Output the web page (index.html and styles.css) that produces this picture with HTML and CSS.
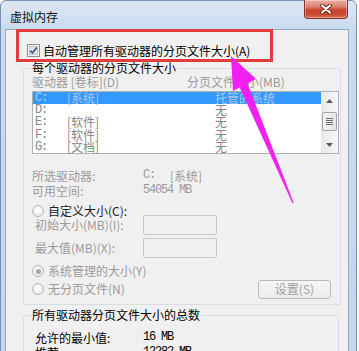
FILE: index.html
```html
<!DOCTYPE html>
<html lang="zh-CN">
<head>
<meta charset="utf-8">
<title>虚拟内存</title>
<link rel="stylesheet" href="styles.css">
</head>
<body>
<div class="window">
  <div class="titlebar">
    <span class="title">虚拟内存</span>
    <button class="close" aria-label="关闭">
      <svg width="12" height="10" viewBox="0 0 12 10"><path d="M2 1.5 L10 8.5 M10 1.5 L2 8.5" stroke="#6a2216" stroke-width="4" stroke-linecap="round"/><path d="M2 1.5 L10 8.5 M10 1.5 L2 8.5" stroke="#ffffff" stroke-width="2.2" stroke-linecap="round"/></svg>
    </button>
  </div>
  <div class="client">
    <label class="auto-row">
      <span class="checkbox"><svg width="13" height="13" viewBox="0 0 13 13"><rect x="0.5" y="0.5" width="12" height="12" fill="#f4f4f4" stroke="#8f8f8f"/><rect x="2.5" y="2.5" width="8" height="8" fill="#e2e6ea" stroke="#c2c8cf"/><path d="M3.3 6.6 L5.5 8.9 L9.8 3.6" fill="none" stroke="#4a5d86" stroke-width="1.7"/></svg></span>
      <span>自动管理所有驱动器的分页文件大小(A)</span>
    </label>
    <fieldset class="group drives">
      <legend>每个驱动器的分页文件大小</legend>
      <div class="list-head gray"><span class="col-drive">驱动器 [卷标](D)</span><span>分页文件大小(MB)</span></div>
      <div class="listbox">
        <div class="rows">
          <div class="row selected"><span class="mono drv">C:</span><span class="vol">[系统]</span><span class="size">托管的系统</span></div>
          <div class="row"><span class="mono drv">D:</span><span class="vol"></span><span class="size">无</span></div>
          <div class="row"><span class="mono drv">E:</span><span class="vol">[软件]</span><span class="size">无</span></div>
          <div class="row"><span class="mono drv">F:</span><span class="vol">[软件]</span><span class="size">无</span></div>
          <div class="row"><span class="mono drv">G:</span><span class="vol">[文档]</span><span class="size">无</span></div>
        </div>
        <div class="scrollbar">
          <div class="sb-btn"><svg width="7" height="4" viewBox="0 0 7 4"><path d="M0 4 L3.5 0 L7 4 Z" fill="#5a5a5a"/></svg></div>
          <div class="sb-track">
            <div class="sb-thumb"><i></i><i></i><i></i><i></i></div>
          </div>
          <div class="sb-btn"><svg width="7" height="4" viewBox="0 0 7 4"><path d="M0 0 L7 0 L3.5 4 Z" fill="#5a5a5a"/></svg></div>
        </div>
      </div>
      <div class="info gray">
        <div class="info-row"><span class="info-label">所选驱动器:</span><span class="mono drv2">C:</span><span>[系统]</span></div>
        <div class="info-row"><span class="info-label">可用空间:</span><span class="mono">54054 MB</span></div>
      </div>
      <div class="radio-row custom">
        <span class="radio"></span><span class="dark">自定义大小(C):</span>
      </div>
      <div class="size-rows gray">
        <div class="size-row"><span class="size-label">初始大小(MB)(I):</span><input class="field" type="text" disabled></div>
        <div class="size-row"><span class="size-label">最大值(MB)(X):</span><input class="field" type="text" disabled></div>
      </div>
      <div class="radio-row managed gray">
        <span class="radio on"><span class="dot"></span></span><span>系统管理的大小(Y)</span>
      </div>
      <div class="last-row gray">
        <div class="radio-line"><span class="radio"></span><span>无分页文件(N)</span></div>
        <button class="btn" disabled>设置(S)</button>
      </div>
    </fieldset>
    <fieldset class="group totals">
      <legend>所有驱动器分页文件大小的总数</legend>
      <div class="total-row first"><span class="total-label">允许的最小值:</span><span class="mono">16 MB</span></div>
      <div class="total-row"><span class="total-label">推荐:</span><span class="mono">12282 MB</span></div>
    </fieldset>
  </div>
  <div class="redbox"></div>
  <svg class="arrow" width="359" height="351" viewBox="0 0 359 351">
    <path d="M231 56 L256 79 L233 91 Z" fill="#f020f0"/>
    <path d="M239 86 L247 82 L293.6 202.6 L292.6 203.4 Z" fill="#f020f0"/>
  </svg>
</div>
</body>
</html>
```

FILE: styles.css
```css
* { box-sizing: border-box; }
html, body { margin: 0; padding: 0; }
body {
  width: 359px;
  height: 351px;
  overflow: hidden;
  background: #ffffff;
  font-family: "Noto Sans CJK SC", "Noto Sans", sans-serif;
  font-size: 12px;
  color: #000;
}
.window {
  position: relative;
  width: 357px;
  height: 362px;
  border: 1px solid #7590b0;
  border-radius: 6px 6px 0 0;
  background: linear-gradient(#dce7f4, #cadbee 28px, #c3d6ec);
  display: flex;
  flex-direction: column;
}
.titlebar {
  flex: none;
  height: 28px;
  display: flex;
  align-items: flex-start;
  padding-left: 9px;
}
.title {
  margin-top: 10px;
  line-height: 12px;
  font-size: 12px;
  color: #111;
}
.close {
  margin: -1px 8px 0 auto;
  width: 44px;
  height: 19px;
  padding: 0;
  border: 1px solid #8a3124;
  border-top: none;
  border-radius: 0 0 4px 4px;
  background: linear-gradient(#eab0a3, #dc7d6b 40%, #c8452f 55%, #c64a30 80%, #d8745a);
  display: flex;
  align-items: center;
  justify-content: center;
  box-shadow: inset 0 0 0 1px rgba(255,255,255,0.35);
}
.client {
  flex: 1;
  margin: 0 7px 0 4px;
  border: 1px solid #95aac2;
  border-bottom: none;
  background: #f0f0f0;
  display: flex;
  flex-direction: column;
}
.auto-row {
  margin-top: 14px;
  padding-left: 21px;
  height: 13px;
  display: flex;
  align-items: center;
  gap: 3px;
  line-height: 13px;
}
.checkbox { display: flex; width: 13px; height: 13px; }
.gray { color: #9b9b9b; }
.dark { color: #222; }
.mono {
  font-family: "Liberation Mono", monospace;
  letter-spacing: -1.2px;
}
.group {
  margin: 0;
  min-width: 0;
  border: 1px solid #d5dfe5;
  border-radius: 3px;
}
.group legend {
  padding: 0 1px;
  margin-left: -1px;
  line-height: 12px;
  font-size: 12px;
  color: #000;
}
.drives {
  margin: 5px 7px 0 17px;
  padding: 0 1px 6px 8px;
}
.list-head {
  margin-top: 2px;
  height: 12px;
  line-height: 12px;
  display: flex;
}
.col-drive { width: 155px; flex: none; }
.listbox {
  margin-top: 3px;
  height: 63px;
  border: 1px solid #adb2b5;
  background: #ffffff;
  display: flex;
}
.rows { flex: 1; display: flex; flex-direction: column; }
.row {
  height: 12.25px;
  line-height: 12px;
  padding-left: 2px;
  display: flex;
  color: #858585;
}
.row.selected { background: #3399ff; color: #a9c8ec; }
.drv { width: 32px; flex: none; }
.vol { width: 148px; flex: none; }
.scrollbar {
  width: 17px;
  flex: none;
  display: flex;
  flex-direction: column;
  background: linear-gradient(90deg, #e9e9e9, #f7f7f7);
}
.sb-btn {
  height: 17px;
  display: flex;
  align-items: center;
  justify-content: center;
}
.sb-track { flex: 1; padding-top: 3px; display: flex; justify-content: center; }
.sb-thumb {
  width: 15px;
  height: 19px;
  border: 1px solid #a3a3a3;
  border-radius: 2px;
  background: linear-gradient(90deg, #f4f4f4, #e4e4e4);
  display: flex;
  flex-direction: column;
  align-items: center;
  justify-content: center;
  gap: 1px;
}
.sb-thumb i {
  display: block;
  width: 7px;
  height: 1px;
  background: #6f6f6f;
}
.info { margin-top: 14px; }
.info-row { height: 15px; line-height: 15px; display: flex; }
.info-label { width: 111px; flex: none; }
.drv2 { width: 27px; flex: none; }
.radio-row {
  display: flex;
  align-items: center;
  gap: 4px;
  line-height: 12px;
}
.radio-row.custom { margin-top: 8px; height: 10px; }
.radio {
  width: 12px;
  height: 12px;
  flex: none;
  border: 1px solid #b9b9b9;
  border-radius: 50%;
  background: radial-gradient(circle at 50% 40%, #ffffff, #e4e4e4);
  display: flex;
  align-items: center;
  justify-content: center;
}
.radio .dot {
  width: 5px;
  height: 5px;
  border-radius: 50%;
  background: #a8a8a8;
}
.size-rows {
  margin-top: -1px;
  display: flex;
  flex-direction: column;
  gap: 3px;
  padding-left: 3px;
}
.size-row { height: 20px; display: flex; align-items: center; }
.size-label { width: 108px; flex: none; line-height: 12px; }
.field {
  width: 74px;
  height: 20px;
  margin: 0;
  border: 1px solid #c8c8c8;
  border-radius: 2px;
  background: #f0f0f0;
  font: inherit;
}
.radio-row.managed { margin-top: 7px; height: 12px; }
.last-row {
  margin-top: 3px;
  height: 18px;
  display: flex;
  align-items: center;
  justify-content: space-between;
}
.radio-line { display: flex; align-items: center; gap: 4px; line-height: 12px; }
.btn {
  margin-right: 8px;
  width: 73px;
  height: 19px;
  padding: 0;
  border: 1px solid #b7babc;
  border-radius: 3px;
  background: linear-gradient(#f6f6f6, #ececec);
  color: #a0a0a0;
  font-family: inherit;
  font-size: 12px;
  line-height: 12px;
}
.totals {
  margin: 4px 9px 0 17px;
  padding: 0 1px 0 8px;
  flex: 1;
}
.total-row {
  height: 15px;
  line-height: 15px;
  display: flex;
  padding-left: 3px;
}
.total-row.first { margin-top: 9px; }
.total-label { width: 108px; flex: none; }
.redbox {
  position: absolute;
  left: 15px;
  top: 28px;
  width: 257px;
  height: 33px;
  border: 3px solid #e23c3c;
}
.arrow {
  position: absolute;
  left: -1px;
  top: -1px;
  pointer-events: none;
}
```
